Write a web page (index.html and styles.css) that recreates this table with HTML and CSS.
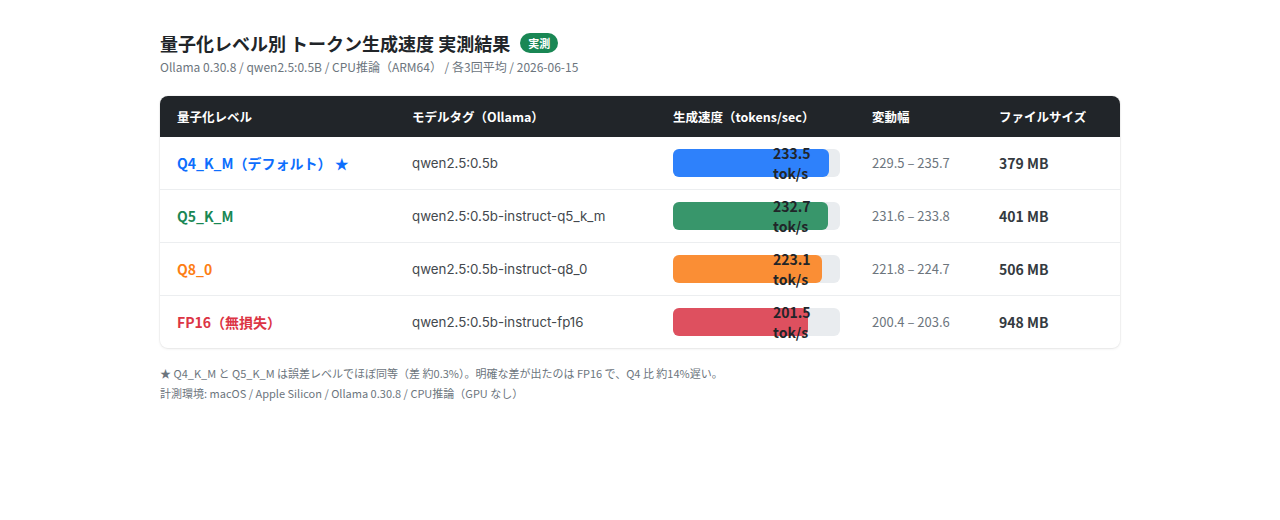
FILE: index.html
```html
<!DOCTYPE html>
<html lang="ja">
<head>
<meta charset="utf-8">
<title>量子化レベル別 トークン生成速度</title>
<link rel="stylesheet" href="styles.css">
</head>
<body>
<main class="page">
  <header class="head">
    <h1 class="title">量子化レベル別 トークン生成速度 実測結果<span class="badge">実測</span></h1>
    <p class="subtitle">Ollama 0.30.8 / qwen2.5:0.5B / CPU推論（ARM64） / 各3回平均 / 2026-06-15</p>
  </header>

  <div class="card">
    <table class="tbl">
      <thead>
        <tr>
          <th class="c1">量子化レベル</th>
          <th class="c2">モデルタグ（Ollama）</th>
          <th class="c3">生成速度（tokens/sec）</th>
          <th class="c4">変動幅</th>
          <th class="c5">ファイルサイズ</th>
        </tr>
      </thead>
      <tbody>
        <tr>
          <td class="name blue">Q4_K_M（デフォルト） ★</td>
          <td class="tag">qwen2.5:0.5b</td>
          <td><div class="bar"><div class="fill fill-blue" style="width:93.4%"></div><span class="val">233.5 tok/s</span></div></td>
          <td class="range">229.5 – 235.7</td>
          <td class="size">379 MB</td>
        </tr>
        <tr>
          <td class="name green">Q5_K_M</td>
          <td class="tag">qwen2.5:0.5b-instruct-q5_k_m</td>
          <td><div class="bar"><div class="fill fill-green" style="width:93.08%"></div><span class="val">232.7 tok/s</span></div></td>
          <td class="range">231.6 – 233.8</td>
          <td class="size">401 MB</td>
        </tr>
        <tr>
          <td class="name orange">Q8_0</td>
          <td class="tag">qwen2.5:0.5b-instruct-q8_0</td>
          <td><div class="bar"><div class="fill fill-orange" style="width:89.24%"></div><span class="val">223.1 tok/s</span></div></td>
          <td class="range">221.8 – 224.7</td>
          <td class="size">506 MB</td>
        </tr>
        <tr>
          <td class="name red">FP16（無損失）</td>
          <td class="tag">qwen2.5:0.5b-instruct-fp16</td>
          <td><div class="bar"><div class="fill fill-red" style="width:80.6%"></div><span class="val">201.5 tok/s</span></div></td>
          <td class="range">200.4 – 203.6</td>
          <td class="size">948 MB</td>
        </tr>
      </tbody>
    </table>
  </div>

  <footer class="notes">
    <p>★ Q4_K_M と Q5_K_M は誤差レベルでほぼ同等（差 約0.3%）。明確な差が出たのは FP16 で、Q4 比 約14%遅い。</p>
    <p>計測環境: macOS / Apple Silicon / Ollama 0.30.8 / CPU推論（GPU なし）</p>
  </footer>
</main>
</body>
</html>
```
FILE: styles.css
```css
* { box-sizing: border-box; }

html, body {
  margin: 0;
  padding: 0;
  background: #ffffff;
}

body {
  font-family: "Noto Sans CJK JP", "Noto Sans", sans-serif;
  color: #212529;
}

.page {
  width: 960px;
  margin: 0 auto;
  padding-top: 31px;
}

.head {
  margin-bottom: 20px;
}

.title {
  margin: 0;
  font-size: 18px;
  font-weight: 700;
  line-height: 24px;
  color: #212529;
  display: flex;
  align-items: center;
}

.badge {
  display: inline-flex;
  align-items: center;
  justify-content: center;
  margin-left: 10px;
  height: 20px;
  padding: 0 8px;
  border-radius: 10px;
  background: #198754;
  color: #ffffff;
  font-size: 11px;
  font-weight: 700;
  line-height: 1;
}

.subtitle {
  margin: 3px 0 0;
  font-size: 12px;
  line-height: 18px;
  color: #6c757d;
}

.card {
  border-radius: 8px;
  overflow: hidden;
  background: #fff;
  box-shadow: 0 1px 3px rgba(0, 0, 0, 0.08), 0 0 0 1px rgba(0, 0, 0, 0.03);
}

.tbl {
  width: 100%;
  border-collapse: collapse;
  table-layout: fixed;
}

.tbl th {
  background: #212529;
  color: #ffffff;
  font-size: 12.5px;
  font-weight: 700;
  text-align: left;
  height: 41px;
  padding: 0 16px;
  white-space: nowrap;
}

.tbl .c1 { width: 236px; padding-left: 17px; }
.c2 { width: 261px; }
.c3 { width: 199px; }
.c4 { width: 127px; }
.c5 { width: 137px; }

.tbl td {
  height: 53px;
  padding: 0 16px;
  border-top: 1px solid #eceef0;
  vertical-align: middle;
  white-space: nowrap;
}

.tbl tbody tr:first-child td { border-top: none; height: 52px; }

.tbl .name {
  padding-left: 17px;
  font-size: 14px;
  font-weight: 700;
}
.blue { color: #0d6efd; }
.green { color: #198754; }
.orange { color: #fd7e14; }
.red { color: #dc3545; }

.tag {
  font-family: Inter, "Noto Sans", sans-serif;
  font-size: 13.3px;
  color: #43484d;
}

.bar {
  position: relative;
  width: 167px;
  height: 28px;
  border-radius: 6px;
  background: #e9ecef;
}

.fill {
  height: 100%;
  border-radius: 6px;
  opacity: 0.85;
}
.fill-blue { background: #0d6efd; }
.fill-green { background: #198754; }
.fill-orange { background: #fd7e14; }
.fill-red { background: #dc3545; }

.val {
  position: absolute;
  left: 100px;
  top: 50%;
  transform: translateY(-50%);
  width: 40px;
  white-space: normal;
  font-size: 14px;
  font-weight: 700;
  line-height: 20px;
  color: #212529;
}

.range {
  font-size: 13px;
  color: #6c757d;
}

.size {
  font-size: 14px;
  font-weight: 700;
  color: #343a40;
}

.notes {
  margin-top: 15px;
  font-size: 11px;
  line-height: 20px;
  color: #6c757d;
}

.notes p {
  margin: 0;
}
```
